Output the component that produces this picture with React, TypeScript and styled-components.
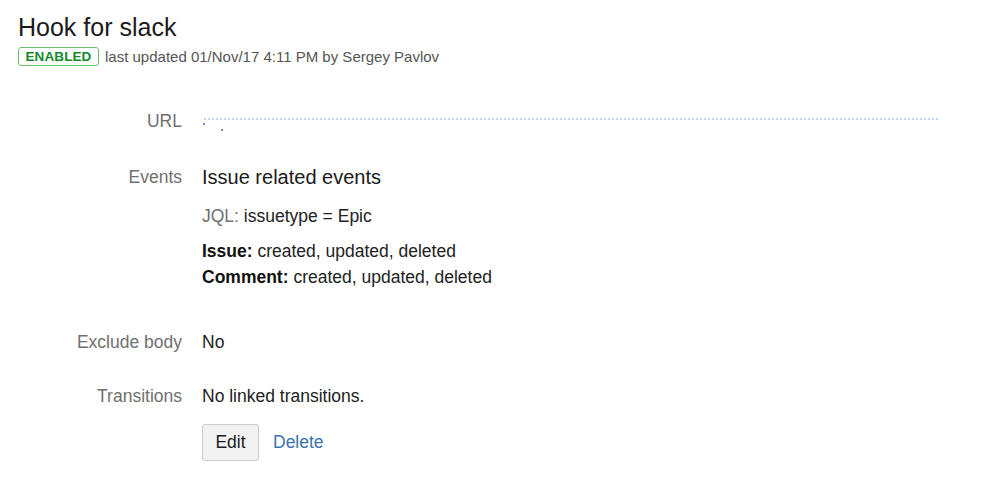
import React from "react";
import styled, { createGlobalStyle } from "styled-components";

const Global = createGlobalStyle`
  html, body { margin: 0; padding: 0; background: #ffffff; }
  body { font-family: "Liberation Sans", Arial, Helvetica, sans-serif; color: #333333; }
`;

const Page = styled.div`
  padding: 12px 0 0 18px;
  width: 981px;
  height: 483px;
  box-sizing: border-box;
`;

const Title = styled.h1`
  margin: 0;
  font-size: 25px;
  line-height: 30px;
  font-weight: 400;
  color: #1a1a1a;
`;

const Meta = styled.div`
  margin-top: 4px;
  display: flex;
  align-items: center;
  gap: 6px;
  height: 20px;
  font-size: 15px;
  color: #555555;
`;

const Lozenge = styled.span`
  display: inline-flex;
  align-items: center;
  justify-content: center;
  box-sizing: border-box;
  width: 81px;
  height: 19px;
  border: 1px solid #6cbf6c;
  border-radius: 3px;
  color: #14892c;
  font-size: 13.5px;
  font-weight: 700;
  letter-spacing: 0.1px;
`;

const Details = styled.div`
  margin: 43px 0 0 -18px;
  display: flex;
  flex-direction: column;
  gap: 30px;
`;

const Row = styled.div<{ $shift?: number }>`
  display: grid;
  grid-template-columns: 182px 1fr;
  column-gap: 20px;
  align-items: start;
  margin-top: ${(p) => p.$shift ?? 0}px;
`;

const Label = styled.div`
  text-align: right;
  font-size: 17.5px;
  line-height: 24px;
  color: #707070;
`;

const Value = styled.div<{ $pad?: number }>`
  font-size: 17.5px;
  line-height: 24px;
  color: #222222;
  padding-bottom: ${(p) => p.$pad ?? 0}px;
`;

const UrlLine = styled.div`
  position: relative;
  height: 24px;
  width: 736px;
`;

const UrlDots = styled.span`
  position: absolute;
  left: 2px;
  right: 0;
  top: 9px;
  border-top: 2px dotted #c3d4f0;
`;

const UrlSpeck = styled.span<{ $x: number; $y: number }>`
  position: absolute;
  left: ${(p) => p.$x}px;
  top: ${(p) => p.$y}px;
  width: 2px;
  height: 2px;
  background: #6f95d6;
`;

const EventsTitle = styled.div`
  font-size: 20px;
  line-height: 24px;
  color: #1a1a1a;
`;

const Jql = styled.div`
  margin-top: 15px;
  line-height: 24px;
`;

const Muted = styled.span`
  color: #707070;
`;

const EventList = styled.div`
  margin-top: 10px;
  line-height: 26px;
`;

const Strong = styled.b`
  font-weight: 700;
  color: #111111;
`;

const Actions = styled.div`
  margin-top: -14px;
  display: flex;
  align-items: center;
  gap: 14px;
`;

const Button = styled.button`
  box-sizing: border-box;
  width: 57px;
  height: 37px;
  border: 1px solid #cccccc;
  border-radius: 3px;
  background: #f2f2f2;
  font-family: inherit;
  font-size: 17.5px;
  color: #1a1a1a;
  padding: 0;
  cursor: pointer;
`;

const Link = styled.a`
  font-size: 17.5px;
  color: #3b73af;
  text-decoration: none;
`;

export default function App() {
  return (
    <>
      <Global />
      <Page>
        <Title>Hook for slack</Title>
        <Meta>
          <Lozenge>ENABLED</Lozenge>
          <span>last updated 01/Nov/17 4:11 PM by Sergey Pavlov</span>
        </Meta>
        <Details>
          <Row>
            <Label>URL</Label>
            <UrlLine>
              <UrlDots />
              <UrlSpeck $x={1} $y={14} />
              <UrlSpeck $x={19} $y={20} />
            </UrlLine>
          </Row>
          <Row $shift={2}>
            <Label>Events</Label>
            <Value $pad={10}>
              <EventsTitle>Issue related events</EventsTitle>
              <Jql>
                <Muted>JQL:</Muted> issuetype = Epic
              </Jql>
              <EventList>
                <div>
                  <Strong>Issue:</Strong> created, updated, deleted
                </div>
                <div>
                  <Strong>Comment:</Strong> created, updated, deleted
                </div>
              </EventList>
            </Value>
          </Row>
          <Row>
            <Label>Exclude body</Label>
            <Value>No</Value>
          </Row>
          <Row>
            <Label>Transitions</Label>
            <Value>No linked transitions.</Value>
          </Row>
          <Row>
            <span />
            <Actions>
              <Button>Edit</Button>
              <Link href="#">Delete</Link>
            </Actions>
          </Row>
        </Details>
      </Page>
    </>
  );
}
